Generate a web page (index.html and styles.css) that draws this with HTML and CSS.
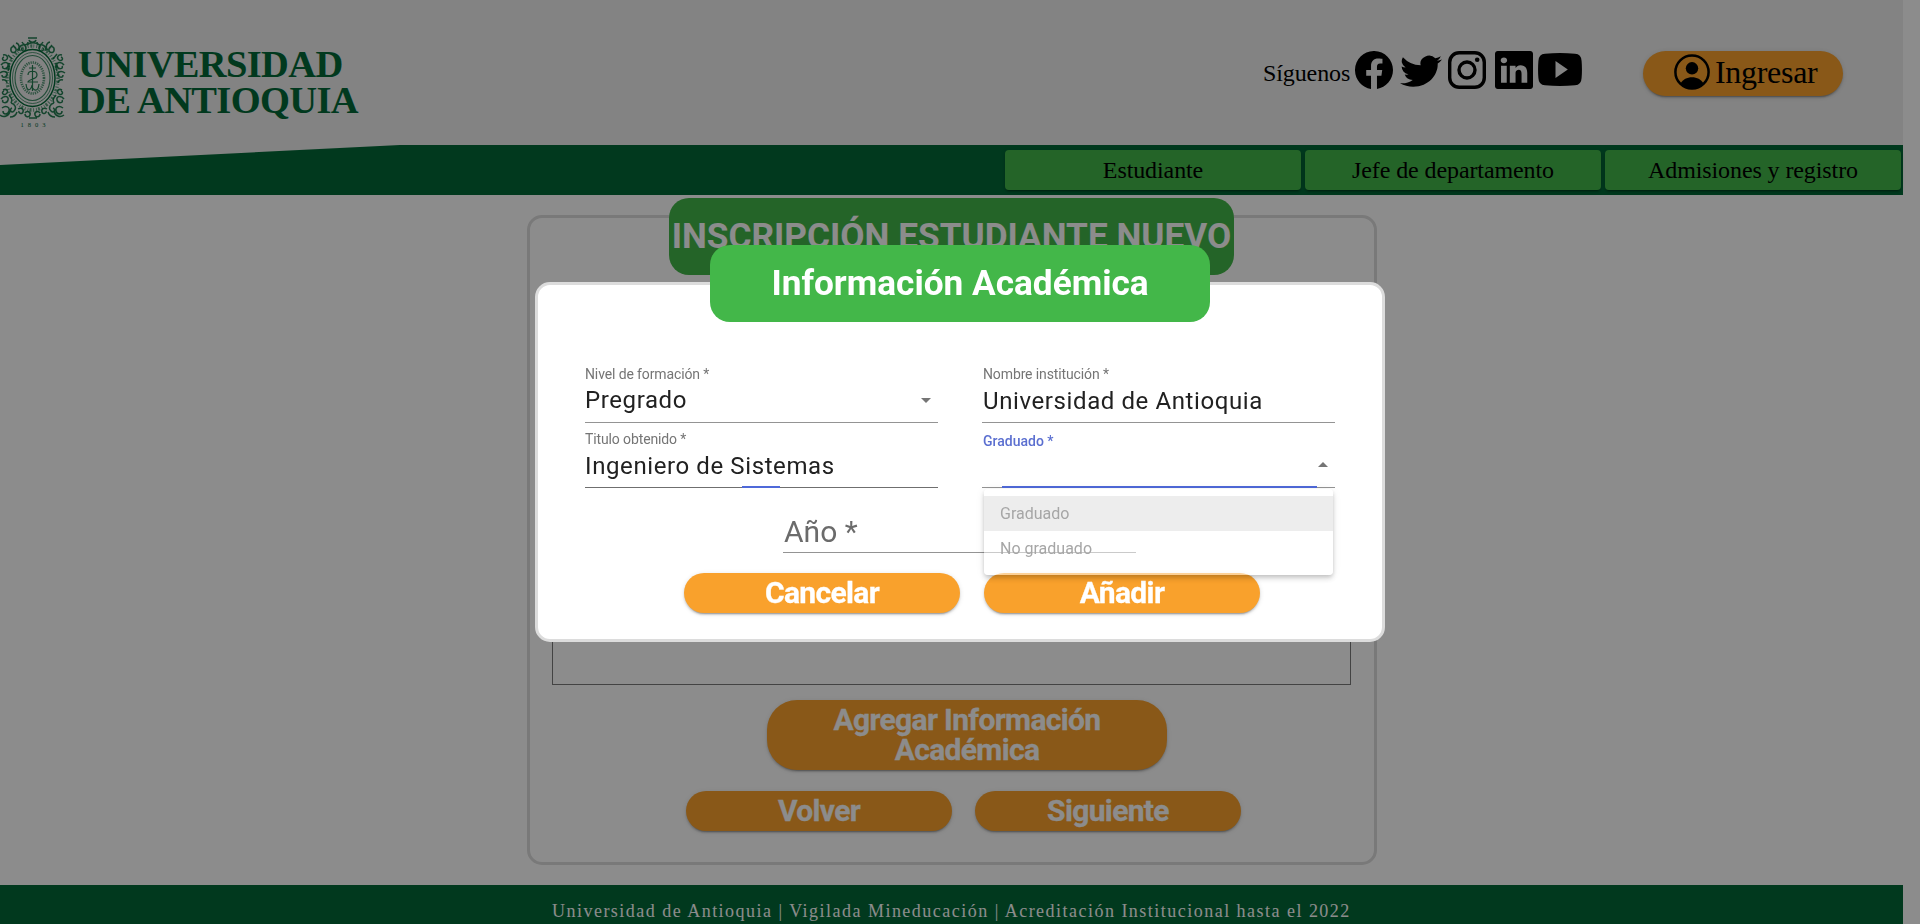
FILE: index.html
```html
<!DOCTYPE html>
<html lang="es">
<head>
<meta charset="utf-8">
<title>Universidad de Antioquia</title>
<link rel="stylesheet" href="styles.css">
</head>
<body>
<div class="page">
  <header class="header">
    <div class="brand">
      <svg class="crest" viewBox="0 0 66 92" width="66" height="92">
        <g fill="none" stroke="currentColor">
          <ellipse cx="32.5" cy="41" rx="25.5" ry="32" stroke-width="3.4" stroke-dasharray="1 1.7 2 1.2 .8 2" opacity=".6"/>
          <g stroke-width="1.5" opacity=".85">
            <path d="M11 14c-1-5 4-6 5-2s-5 5-5 1M16 6c4 1 4 6 1 7M13 8l3 4M19 14c0-7 7-8 7-3s-6 3-4 0M22 5c2 4 6 3 6 0M28 1h9M29 3c1 3 6 3 7 0M27 8c3-3 9-3 12 0"/>
            <path d="M54 14c1-5-4-6-5-2s5 5 5 1M50 5c-4 1-5 6-2 8M52 8l-3 4M46 14c0-7-7-8-7-3s6 3 4 0M43 5c-2 4-6 3-6 0"/>
            <path d="M3 18c4-1 6 3 3 5s-5-2-2-3M8 18l4 4M1 28c3-4 8-3 7 1s-7 3-5 0M0 36c4-3 8-1 7 2s-5 3-5 0M9 26c0 3 1 4-1 8M2 43c3-1 5 1 5 3"/>
            <path d="M62 18c-4-1-6 3-3 5s5-2 2-3M57 17l-4 5M64 28c-3-4-8-3-7 1s7 3 5 0M65 36c-4-3-8-1-7 2s5 3 5 0M56 26c0 3-1 4 1 8M63 43c-3-1-5 1-5 3"/>
            <path d="M3 53c4-2 6 2 3 4s-5-2-2-3M1 62c3-4 8-3 7 1s-7 3-5 0M2 71c4-3 8-1 7 3s-6 4-6 0M9 58c2 3 4 4 2 8M0 78c4 3 9 1 10-4M11 66c4 1 6 5 3 8s-5-2-2-3M10 80c3 0 6-2 7-5"/>
            <path d="M62 53c-4-2-6 2-3 4s5-2 2-3M64 62c-3-4-8-3-7 1s7 3 5 0M63 71c-4-3-8-1-7 3s6 4 6 0M56 58c-2 3-4 4-2 8M64 78c-4 3-9 1-10-4M54 66c-4 1-6 5-3 8s5-2 2-3M55 80c-3 0-6-2-7-5"/>
            <path d="M18 72c3-2 6 0 5 3s-5 1-4-1M25 76c2-3 6-1 5 2s-5 2-5-1M47 72c-3-2-6 0-5 3s5 1 4-1M40 76c-2-3-6-1-5 2s5 2 5-1M29 81h8"/>
          </g>
          <ellipse cx="32.500" cy="41" rx="22.500" ry="28.500" stroke-width="1.500"/>
          <ellipse cx="32.500" cy="41" rx="20" ry="25.500" stroke-width="1" opacity=".65"/>
          <ellipse cx="32.500" cy="41" rx="17.500" ry="22.500" stroke-width="1.100" opacity=".75"/>
          <ellipse cx="32.500" cy="41" rx="11.500" ry="15.500" stroke-width="2.600" stroke-dasharray="1.200 1" opacity=".65"/>
          <path d="M32.500 28v26M29 31h7M28 38c0-5 9-5 9 0s-9 4-9 7h10M26 47c1 9 5 6 6 1 1 6 6 8 7-1" stroke-width="1.200" opacity=".85"/>
        </g>
        <text x="20.500" y="90" font-size="6.500" letter-spacing="4" fill="currentColor">1803</text>
      </svg>
      <div class="brand-name"><span>UNIVERSIDAD</span><span>DE ANTIOQUIA</span></div>
    </div>
    <div class="social">
      <span class="follow">Síguenos</span>
      <svg width="38" height="38" viewBox="0 0 16 16"><path d="M16 8.049c0-4.446-3.582-8.050-8-8.050C3.580 0-.002 3.603-.002 8.050c0 4.017 2.926 7.347 6.750 7.951v-5.625h-2.030V8.050H6.750V6.275c0-2.017 1.195-3.131 3.022-3.131.876 0 1.791.157 1.791.157v1.980h-1.009c-.993 0-1.303.621-1.303 1.258v1.510h2.218l-.354 2.326H9.250V16c3.824-.604 6.750-3.934 6.750-7.951z"/></svg>
      <svg class="i-tw" width="42" height="38" viewBox="0 0 16 16" preserveAspectRatio="none"><path d="M5.026 15c6.038 0 9.341-5.003 9.341-9.334 0-.14 0-.282-.006-.422A6.685 6.685 0 0 0 16 3.542a6.658 6.658 0 0 1-1.889.518 3.301 3.301 0 0 0 1.447-1.817 6.533 6.533 0 0 1-2.087.793A3.286 3.286 0 0 0 7.875 6.030a9.325 9.325 0 0 1-6.767-3.429 3.289 3.289 0 0 0 1.018 4.382A3.323 3.323 0 0 1 .64 6.575v.045a3.288 3.288 0 0 0 2.632 3.218 3.203 3.203 0 0 1-.865.115 3.230 3.230 0 0 1-.614-.057 3.283 3.283 0 0 0 3.067 2.277A6.588 6.588 0 0 1 .78 13.580a6.320 6.320 0 0 1-.78-.045A9.344 9.344 0 0 0 5.026 15z"/></svg>
      <svg class="i-ig" width="38" height="38" viewBox="0 0 38 38"><rect x="1.700" y="1.700" width="34.600" height="34.600" rx="9.500" fill="none" stroke="#000" stroke-width="3.400"/><circle cx="19" cy="19" r="8" fill="none" stroke="#000" stroke-width="3.400"/><circle cx="29.200" cy="8.800" r="2.300"/></svg>
      <svg class="i-in" width="38" height="38" viewBox="0 0 16 16"><path d="M0 1.146C0 .513.526 0 1.175 0h13.650C15.474 0 16 .513 16 1.146v13.708c0 .633-.526 1.146-1.175 1.146H1.175C.526 16 0 15.487 0 14.854V1.146zm4.943 12.248V6.169H2.542v7.225h2.401zm-1.200-8.212c.837 0 1.358-.554 1.358-1.248-.015-.709-.52-1.248-1.342-1.248-.822 0-1.359.54-1.359 1.248 0 .694.521 1.248 1.327 1.248h.016zm4.908 8.212V9.359c0-.216.016-.432.080-.586.173-.431.568-.878 1.232-.878.869 0 1.216.662 1.216 1.634v3.865h2.401V9.250c0-2.220-1.184-3.252-2.764-3.252-1.274 0-1.845.7-2.165 1.193V6.169h-2.400c.030.678 0 7.225 0 7.225h2.400z"/></svg>
      <svg class="i-yt" width="44" height="33" viewBox="0 0 44 33"><path fill-rule="evenodd" d="M7 .7Q22-.5 37 .7 43.300 1 43.600 8q.7 8.500 0 17-.3 7-6.600 7.300-15 1.200-30 0Q.7 32 .4 25q-.7-8.500 0-17Q.7 1 7 .7ZM17.500 8v17l12.300-8.500Z"/></svg>
    </div>
    <button class="login">
      <svg width="36" height="36" viewBox="0 0 36 36"><circle cx="18" cy="18" r="16.600" fill="none" stroke="#000" stroke-width="2.500"/><circle cx="18" cy="14.300" r="6.200"/><path d="M6.500 29.500C9 25.500 13 23.300 18 23.300s9 2.200 11.500 6.200C26.500 33 22.500 35 18 35S9.500 33 6.500 29.500Z"/></svg>
      <span>Ingresar</span>
    </button>
  </header>
  <nav class="nav">
    <a class="nav-item">Estudiante</a>
    <a class="nav-item">Jefe de departamento</a>
    <a class="nav-item">Admisiones y registro</a>
  </nav>
  <main class="card">
    <h1 class="pill pill-page">INSCRIPCIÓN ESTUDIANTE NUEVO</h1>
    <div class="list"></div>
    <button class="btn btn-add">Agregar Información<br>Académica</button>
    <div class="actions">
      <button class="btn">Volver</button>
      <button class="btn">Siguiente</button>
    </div>
  </main>
  <footer class="footer">Universidad de Antioquia | Vigilada Mineducación | Acreditación Institucional hasta el 2022</footer>
</div>
<div class="overlay">
  <section class="modal">
    <h2 class="pill pill-modal">Información Académica</h2>
    <div class="fields">
      <div class="field">
        <label>Nivel de formación *</label>
        <div class="value"><span>Pregrado</span><i class="arrow"></i></div>
      </div>
      <div class="field right">
        <label>Nombre institución *</label>
        <div class="value low"><span>Universidad de Antioquia</span></div>
      </div>
      <div class="field dark">
        <label>Titulo obtenido *</label>
        <div class="value low"><span>Ingeniero de Sistemas</span></div>
        <div class="ripple ripple-out"></div>
      </div>
      <div class="field right field-grad">
        <label>Graduado *</label>
        <div class="value"><i class="arrow up"></i></div>
        <div class="ripple ripple-in"></div>
        <div class="menu">
          <div class="option active">Graduado</div>
          <div class="option">No graduado</div>
        </div>
      </div>
    </div>
    <div class="field field-year"><span class="year">Año *</span></div>
    <div class="actions modal-actions">
      <button class="btn">Cancelar</button>
      <button class="btn">Añadir</button>
    </div>
  </section>
</div>
</body>
</html>
```
FILE: styles.css
```css
* { box-sizing: border-box; }
body { margin: 0; background: #fff; font-family: Roboto, sans-serif; overflow: hidden; }
h1, h2 { margin: 0; }
button { border: 0; padding: 0; font: inherit; }

.page { width: 1903px; height: 924px; display: flex; flex-direction: column; }

.header { height: 145px; background: #eee; display: flex; font-family: "Liberation Serif", serif; flex: none; }
.brand { display: flex; width: 1263px; color: #026937; padding-top: 38px; }
.crest { display: block; margin-top: -1px; }
.brand-name { display: flex; flex-direction: column; margin: 8px 0 0 12px; font-weight: bold; font-size: 38.500px; line-height: 36px; letter-spacing: -.650px; }
.social { display: flex; align-items: flex-start; padding-top: 51px; width: 380px; font-size: 24px; }
.follow { line-height: 28px; margin: 8px 4px 0 0; width: 88px; letter-spacing: -.100px; }
.i-tw { margin-left: 7px; }
.i-ig { margin-left: 6px; }
.i-in { margin-left: 9px; }
.i-yt { margin: 2px 0 0 5px; }
.login { display: flex; align-items: center; gap: 5px; margin-top: 51px; padding-left: 31px; width: 200px; height: 45px; border-radius: 23px; background: #f9a12c; font-size: 32px; line-height: 36px; letter-spacing: -.300px; box-shadow: 0 3px 1px -2px rgba(0,0,0,.2), 0 2px 2px rgba(0,0,0,.14), 0 1px 5px rgba(0,0,0,.12); }
.login svg { margin-top: -3px; }
.login span { margin-top: -3px; }

.nav { position: relative; height: 50px; flex: none; background: #026937; display: flex; justify-content: flex-end; gap: 4px; padding: 5px 2px 5px 0; font: 24px "Liberation Serif", serif; letter-spacing: -.100px; }
.nav::before { content: ""; position: absolute; left: 0; top: 0; width: 400px; height: 20px; background: #eee; clip-path: polygon(0 0, 100% 0, 0 100%); }
.nav-item { width: 296px; height: 40px; border-radius: 4px; background: #43b749; display: flex; align-items: center; justify-content: center; box-shadow: 0 3px 1px -2px rgba(0,0,0,.2), 0 2px 2px rgba(0,0,0,.14), 0 1px 5px rgba(0,0,0,.12); }

.card { margin: 20px 0 0 527px; width: 850px; height: 650px; flex: none; border: 3px solid #dcdcdc; border-radius: 15px; display: flex; flex-direction: column; align-items: center; }
.pill { background: #43b749; color: #fff; height: 77px; border-radius: 20px; font-size: 35.200px; font-weight: bold; display: flex; align-items: center; justify-content: center; white-space: nowrap; padding-bottom: 2px; }
.pill-page { width: 565px; margin: -20px 1px 0 0; }
.list { width: 799px; height: 380px; border: 1px solid #7a7a7a; margin: 30px 1px 0 0; }
.btn { background: #f9a12c; color: #fff; width: 266px; height: 40px; border-radius: 20px; font-size: 30px; line-height: 30px; font-weight: bold; letter-spacing: -.650px; -webkit-text-stroke: .300px #fff; text-align: center; box-shadow: 0 3px 1px -2px rgba(0,0,0,.2), 0 2px 2px rgba(0,0,0,.14), 0 1px 5px rgba(0,0,0,.12); }
.btn-add { width: 400px; height: 70px; border-radius: 30px; margin: 15px 0 21px 30px; }
.actions { display: flex; gap: 23px; }
.card .actions { margin-left: 23px; }

.footer { margin-top: 20px; flex: 1; background: #026937; color: #fff; padding-left: 552px; padding-top: 16px; font: 18px/20px "Liberation Serif", serif; letter-spacing: 1.480px; white-space: nowrap; }

.overlay { position: fixed; inset: 0; background: rgba(0,0,0,.45); display: flex; align-items: center; justify-content: center; }
.modal { width: 850px; height: 360px; background: #fff; border: 3px solid #dcdcdc; border-radius: 15px; display: flex; flex-direction: column; }
.pill-modal { width: 500px; flex: none; margin: -40px auto 0; }
.fields { display: grid; grid-template-columns: 353px 353px; column-gap: 44px; padding: 38px 0 0 47px; }
.field { position: relative; width: 353px; height: 65px; border-bottom: 1px solid #949494; color: #212121; display: flex; flex-direction: column; }
.fields .field:nth-child(-n+2) { height: 63px; padding-top: 5px; }
.fields .field:nth-child(n+3) { padding-top: 7px; }
.fields .right { padding-left: 1px; }
.fields .dark { border-bottom-color: #6f6f6f; }
.field label { font-size: 14px; line-height: 18px; color: #757575; letter-spacing: -.120px; }
.value { display: flex; align-items: center; justify-content: space-between; font-size: 24px; line-height: 34px; letter-spacing: .600px; }
.value.low { padding-top: 1px; }
.arrow { width: 0; height: 0; border: 5px solid transparent; border-top-color: #757575; border-bottom: 0; margin: 1px 7px 0 auto; }
.arrow.up { border-bottom: 5px solid #757575; border-top: 0; margin-top: 12px; }
.fields .field-grad label { color: #5b6fd0; font-weight: 500; padding-top: 2px; letter-spacing: 0; }
.ripple { position: absolute; bottom: -1px; height: 2px; background: #4f69d9; }
.ripple-out { left: 157px; width: 38px; }
.ripple-in { left: 20px; width: 315px; }
.menu { position: absolute; left: 2px; top: 66px; width: 349px; height: 86px; z-index: 2; background: rgba(255,255,255,.5); border-radius: 4px; padding-top: 7px; box-shadow: 0 2px 4px -1px rgba(0,0,0,.14), 0 4px 5px rgba(0,0,0,.1), 0 1px 10px rgba(0,0,0,.08); }
.option { height: 35px; line-height: 35px; padding-left: 16px; font-size: 16px; color: #a6a6a6; }
.option.active { background: #ededed; }
.field-year { margin-left: 245px; flex: none; }
.year { font-size: 30px; line-height: 40px; color: #6b6b6b; padding: 24px 0 0 1px; }
.modal-actions { gap: 24px; margin: 20px 0 0 146px; }
.modal-actions .btn { width: 276px; }
```
